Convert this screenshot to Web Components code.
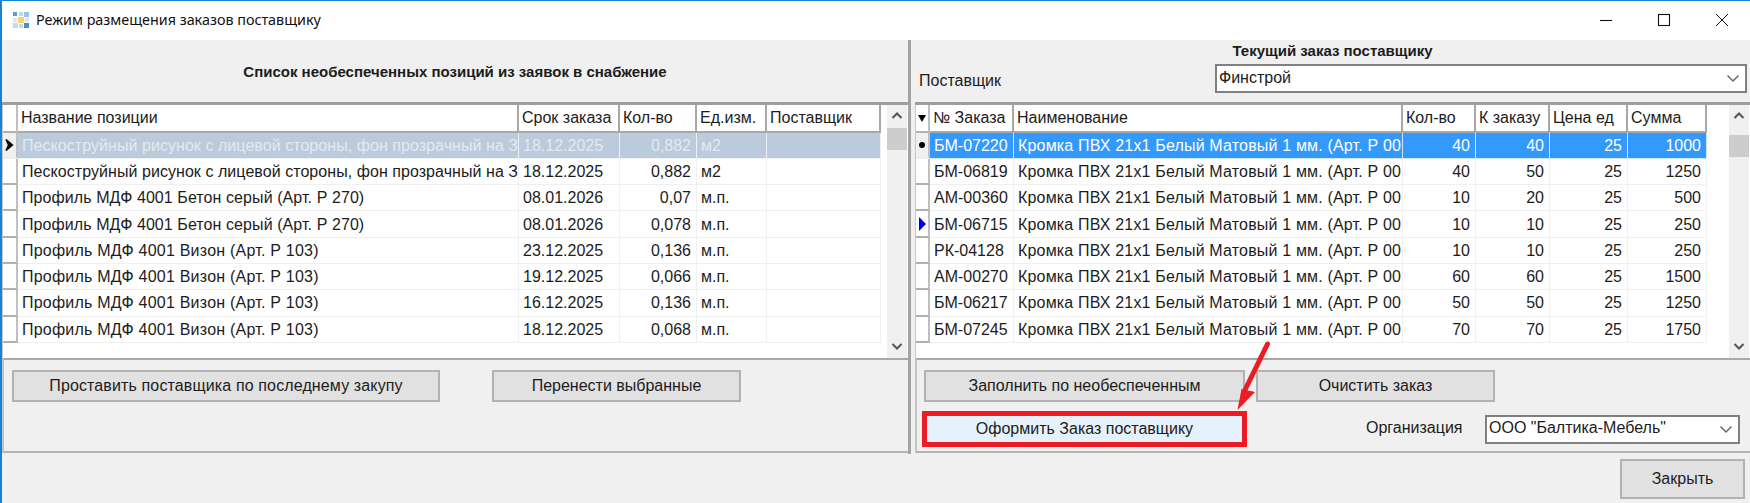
<!DOCTYPE html>
<html lang="ru">
<head>
<meta charset="utf-8">
<title>Режим размещения заказов поставщику</title>
<style>
    html, body { margin: 0; padding: 0; background: #f0f0f0; }
    body { font: 16px "Liberation Sans", Arial, sans-serif; color: #1c1c1c; overflow: hidden; }
</style>
</head>
<body>
<order-window>
    <form-panel slot="left" divider>
        <div slot="head" style="height:62px;display:flex;align-items:center;justify-content:center;font-weight:bold;font-size:15px">Список необеспеченных позиций из заявок в снабжение</div>
        <data-grid slot="grid" source="needs"></data-grid>
        <div slot="actions" style="display:flex;padding:10px 0 0 8px">
            <form-button style="width:428px;letter-spacing:.13px">Проставить поставщика по последнему закупу</form-button>
            <form-button style="width:249px;margin-left:52px">Перенести выбранные</form-button>
        </div>
    </form-panel>
    <form-panel slot="right">
        <div slot="head" style="height:62px;display:flex;flex-direction:column;padding-right:3px">
            <div style="height:22px;text-align:center;font-weight:bold;font-size:15px;line-height:21px;padding-left:3px">Текущий заказ поставщику</div>
            <div style="display:flex;align-items:center;padding-top:2px">
                <span style="flex:1;padding:5px 0 0 4px">Поставщик</span>
                <combo-box style="width:532px;height:29px">Финстрой</combo-box>
            </div>
        </div>
        <data-grid slot="grid" source="order"></data-grid>
        <div slot="actions" style="display:flex;flex-direction:column;padding:10px 0 0 7px">
            <div style="display:flex">
                <form-button style="width:321px">Заполнить по необеспеченным</form-button>
                <form-button style="width:239px;margin-left:11px">Очистить заказ</form-button>
            </div>
            <div style="display:flex;align-items:center;margin-top:9px;margin-left:-2px">
                <form-button accent style="width:325px;height:36px">Оформить Заказ поставщику</form-button>
                <span style="margin-left:119px;width:119px;padding-bottom:2px">Организация</span>
                <combo-box style="width:255px;height:29px">ООО "Балтика-Мебель"</combo-box>
            </div>
        </div>
    </form-panel>
    <form-button slot="footer" style="width:125px;height:40px">Закрыть</form-button>
</order-window>

<script>
const GRID_DATA = {
    needs: {
        head: 15,
        current: 0,
        cols: [
            { w: 501, title: 'Название позиции' },
            { w: 101, title: 'Срок заказа' },
            { w: 77, title: 'Кол-во', right: true },
            { w: 70, title: 'Ед.изм.' },
            { w: 114, title: 'Поставщик' }
        ],
        selClass: 'sel-muted',
        marks: { 0: 'arrow' },
        thumbGap: 1,
        rows: [
            ['Пескоструйный рисунок с лицевой стороны, фон прозрачный на З', '18.12.2025', '0,882', 'м2', ''],
            ['Пескоструйный рисунок с лицевой стороны, фон прозрачный на З', '18.12.2025', '0,882', 'м2', ''],
            ['Профиль МДФ 4001 Бетон серый (Арт. Р 270)', '08.01.2026', '0,07', 'м.п.', ''],
            ['Профиль МДФ 4001 Бетон серый (Арт. Р 270)', '08.01.2026', '0,078', 'м.п.', ''],
            ['Профиль МДФ 4001 Визон (Арт. Р 103)', '23.12.2025', '0,136', 'м.п.', ''],
            ['Профиль МДФ 4001 Визон (Арт. Р 103)', '19.12.2025', '0,066', 'м.п.', ''],
            ['Профиль МДФ 4001 Визон (Арт. Р 103)', '16.12.2025', '0,136', 'м.п.', ''],
            ['Профиль МДФ 4001 Визон (Арт. Р 103)', '18.12.2025', '0,068', 'м.п.', '']
        ]
    },
    order: {
        head: 14,
        current: 0,
        sortMark: true,
        cols: [
            { w: 84, title: '№ Заказа' },
            { w: 389, title: 'Наименование' },
            { w: 73, title: 'Кол-во', right: true },
            { w: 74, title: 'К заказу', right: true },
            { w: 78, title: 'Цена ед', right: true },
            { w: 79, title: 'Сумма', right: true }
        ],
        selClass: 'sel-blue',
        marks: { 0: 'dot', 3: 'blue' },
        thumbGap: 8,
        rows: [
            ['БМ-07220', 40, 40, 25, 1000],
            ['БМ-06819', 40, 50, 25, 1250],
            ['АМ-00360', 10, 20, 25, 500],
            ['БМ-06715', 10, 10, 25, 250],
            ['РК-04128', 10, 10, 25, 250],
            ['АМ-00270', 60, 60, 25, 1500],
            ['БМ-06217', 50, 50, 25, 1250],
            ['БМ-07245', 70, 70, 25, 1750]
        ].map(r => [r[0], 'Кромка ПВХ 21х1 Белый Матовый 1 мм. (Арт. Р 00', r[1], r[2], r[3], r[4]])
    }
};

// the original font runs a little wider on these strings than Liberation Sans
function textSpacing(val) {
    const s = String(val);
    if (s.startsWith('Кромка')) return 0.17;
    if (s.includes('Визон')) return 0.22;
    if (s.includes('Бетон')) return 0.08;
    if (s.startsWith('Пескоструйный')) return 0.055;
    return 0;
}

const MARKS = {
    arrow: '<svg width="11" height="14" viewBox="0 0 11 14"><path d="M2 1.5 L8.5 7 L2 12.5 L4.5 7 Z" fill="#000" stroke="#000" stroke-width="1.4"/></svg>',
    dot: '<svg width="10" height="10" viewBox="0 0 10 10"><circle cx="5" cy="5" r="3" fill="#000"/></svg>',
    blue: '<svg width="10" height="16" viewBox="0 0 10 16"><path d="M2 1 L9 8 L2 15 Z" fill="#0000f0"/></svg>',
    sort: '<svg width="10" height="10" viewBox="0 0 10 10"><path d="M1 2 H9 L5 9 Z" fill="#000"/></svg>'
};

class OrderWindow extends HTMLElement {
    constructor() {
        super();
        const shadow = this.attachShadow({ mode: 'open' });
        shadow.innerHTML = `
        <style>
            :host {
                display: flex;
                flex-direction: column;
                position: relative;
                width: 1750px;
                height: 503px;
                box-sizing: border-box;
                border-top: 1px solid #1583d8;
                border-left: 2px solid #1583d8;
                background: #f0f0f0;
                overflow: hidden;
            }
            .panels {
                display: grid;
                grid-template-columns: 909px 835px;
                column-gap: 4px;
                height: 414px;
            }
            .footer {
                display: flex;
                justify-content: flex-end;
                padding: 5px 5px 0 0;
            }
            .arrow { position: absolute; left: 1226px; top: 339px; }
        </style>
        <title-bar>Режим размещения заказов поставщику</title-bar>
        <div class="panels">
            <slot name="left"></slot>
            <slot name="right"></slot>
        </div>
        <div class="footer"><slot name="footer"></slot></div>
        <svg class="arrow" width="50" height="75" viewBox="0 0 50 75">
            <path d="M39.5 4 L16 52" stroke="#ed1c24" stroke-width="5" stroke-linecap="round" fill="none"/>
            <path d="M9.5 70 L13.5 49 L27 52 Z" fill="#ed1c24"/>
        </svg>
        `;
    }
}

class TitleBar extends HTMLElement {
    constructor() {
        super();
        const shadow = this.attachShadow({ mode: 'open' });
        shadow.innerHTML = `
        <style>
            :host {
                display: flex;
                align-items: center;
                height: 39px;
                box-sizing: border-box;
                padding-bottom: 2px;
                background: #fff;
                flex: none;
            }
            .icon { margin-left: 11px; flex: none; }
            .text {
                margin-left: 7px;
                flex: 1;
                font: 14.33px "Noto Sans", "Open Sans", sans-serif;
                color: #111;
            }
            .btn { width: 58px; height: 37px; display: flex; align-items: center; justify-content: center; flex: none; }
        </style>
        <svg class="icon" width="16" height="16" viewBox="0 0 16 16">
            <rect x="0" y="0" width="4" height="4" fill="#5b9bd5"/>
            <rect x="6" y="0" width="4" height="4" fill="#c5d9ec"/>
            <rect x="11" y="0" width="5" height="5" fill="#9cc3e6"/>
            <rect x="0" y="6" width="4" height="4" fill="#dbe7f3"/>
            <rect x="5" y="5" width="6" height="6" fill="#f5d76e"/>
            <rect x="12" y="6" width="4" height="4" fill="#dbe7f3"/>
            <rect x="0" y="11" width="5" height="5" fill="#c5d9ec"/>
            <rect x="6" y="12" width="4" height="4" fill="#c5d9ec"/>
            <rect x="11" y="11" width="5" height="5" fill="#4a90c8"/>
        </svg>
        <div class="text"><slot></slot></div>
        <div class="btn"><svg width="14" height="14" viewBox="0 0 14 14"><path d="M1 7.5 H13" stroke="#111" stroke-width="1.1"/></svg></div>
        <div class="btn"><svg width="14" height="14" viewBox="0 0 14 14"><rect x="1.5" y="1.5" width="11" height="11" fill="none" stroke="#111" stroke-width="1.1"/></svg></div>
        <div class="btn" style="width:46px;margin-left:6px;margin-right:5px"><svg width="14" height="14" viewBox="0 0 14 14"><path d="M1 1 L13 13 M13 1 L1 13" stroke="#111" stroke-width="1"/></svg></div>
        `;
    }
}

class FormPanel extends HTMLElement {
    constructor() {
        super();
        const shadow = this.attachShadow({ mode: 'open' });
        shadow.innerHTML = `
        <style>
            :host {
                display: flex;
                flex-direction: column;
                box-sizing: border-box;
                min-width: 0;
            }
            :host([divider]) { border-right: 3px solid #a3a3a3; }
            .head { height: 62px; border-bottom: 3px solid #9f9f9f; flex: none; }
            .grid { height: 253px; flex: none; }
            .actions {
                height: 91px;
                border-top: 2px solid #a8a8a8;
                border-bottom: 2px solid #b4b4b4;
                border-left: 2px solid #c4c4c4;
                flex: none;
            }
        </style>
        <div class="head"><slot name="head"></slot></div>
        <div class="grid"><slot name="grid"></slot></div>
        <div class="actions"><slot name="actions"></slot></div>
        `;
    }
}

class FormButton extends HTMLElement {
    constructor() {
        super();
        const shadow = this.attachShadow({ mode: 'open' });
        shadow.innerHTML = `
        <style>
            :host {
                display: flex;
                align-items: center;
                justify-content: center;
                box-sizing: border-box;
                height: 32px;
                flex: none;
                background: #e1e1e1;
                border: 2px solid #b2b2b2;
            }
            :host([accent]) { background: #e5f1fb; border: 5px solid #ed1c24; }
        </style>
        <slot></slot>
        `;
    }
}

class ComboBox extends HTMLElement {
    constructor() {
        super();
        const shadow = this.attachShadow({ mode: 'open' });
        shadow.innerHTML = `
        <style>
            :host {
                display: flex;
                align-items: center;
                box-sizing: border-box;
                flex: none;
                background: #fff;
                border: 2px solid #808080;
                padding-left: 2px;
            }
            .text { flex: 1; padding-bottom: 2px; }
            svg { margin-right: 5px; flex: none; }
        </style>
        <div class="text"><slot></slot></div>
        <svg width="14" height="9" viewBox="0 0 14 9"><path d="M1.5 1.5 L7 7 L12.5 1.5" fill="none" stroke="#6a6a6a" stroke-width="1.5"/></svg>
        `;
    }
}

class DataGrid extends HTMLElement {
    constructor() {
        super();
        this.attachShadow({ mode: 'open' });
    }
    connectedCallback() {
        const data = GRID_DATA[this.getAttribute('source')];
        const template = [data.head + 'px'].concat(data.cols.map(c => c.w + 'px')).join(' ');

        let cells = `<div class="cell hcell rowhead">${data.sortMark ? MARKS.sort : ''}</div>`;
        data.cols.forEach(c => {
            cells += `<div class="cell hcell">${c.title}</div>`;
        });
        data.rows.forEach((row, i) => {
            const sel = i === data.current ? data.selClass : '';
            const mark = data.marks[i] ? MARKS[data.marks[i]] : '';
            cells += `<div class="cell rowhead ${i === data.current ? 'cur' : ''}">${mark}</div>`;
            row.forEach((val, n) => {
                cells += `<div class="cell ${sel} ${data.cols[n].right ? 'num' : ''}" style="letter-spacing:${textSpacing(val)}px">${val}</div>`;
            });
        });

        this.shadowRoot.innerHTML = `
        <style>
            :host {
                display: flex;
                height: 253px;
                box-sizing: border-box;
                background: #fff;
                border-left: 1px solid #c8c8c8;
                padding-right: 1px;
            }
            .table {
                flex: 1;
                display: grid;
                grid-template-columns: ${template};
                grid-template-rows: 27.5px repeat(8, 26.3px);
                align-content: start;
            }
            .cell {
                box-sizing: border-box;
                display: flex;
                align-items: center;
                white-space: nowrap;
                overflow: hidden;
                padding: 1px 0 0 4px;
                border-right: 1px solid #f0f0f0;
                border-bottom: 1px solid #f0f0f0;
            }
            .hcell {
                padding-left: 3px;
                border-right: 2px solid #a8a8a8;
                border-bottom: 2px solid #a8a8a8;
            }
            .rowhead {
                padding: 0;
                justify-content: center;
                border-right: 2px solid #c0c0c0;
                border-bottom: 2px solid #b0b0b0;
            }
            .rowhead.cur { background: #f0f0f0; border-bottom-color: #f0f0f0; }
            .num { justify-content: flex-end; padding-right: 5px; padding-left: 0; }
            .sel-muted { background: #bccbdb; color: #e3e9f0; border-color: #eef1f4; }
            .sel-blue { background: #3399ff; color: #fff; border-color: #cfe6ff; }
            .scroll {
                width: 20px;
                flex: none;
                display: flex;
                flex-direction: column;
                align-items: center;
                background: #f0f0f0;
            }
            .scroll svg { flex: none; }
            .up { margin-top: 6px; }
            .track { height: 7px; flex: none; }
            .thumb { width: 100%; height: 22px; background: #cdcdcd; margin-top: ${data.thumbGap}px; flex: none; }
            .down { margin-top: auto; margin-bottom: 7px; }
        </style>
        <div class="table">${cells}</div>
        <div class="scroll">
            <svg class="up" width="12" height="9" viewBox="0 0 12 9"><path d="M1.5 7 L6 2.5 L10.5 7" fill="none" stroke="#555" stroke-width="2"/></svg>
            <div class="track"></div>
            <div class="thumb"></div>
            <svg class="down" width="12" height="9" viewBox="0 0 12 9"><path d="M1.5 2 L6 6.5 L10.5 2" fill="none" stroke="#555" stroke-width="2"/></svg>
        </div>
        `;
    }
}

customElements.define('order-window', OrderWindow);
customElements.define('title-bar', TitleBar);
customElements.define('form-panel', FormPanel);
customElements.define('form-button', FormButton);
customElements.define('combo-box', ComboBox);
customElements.define('data-grid', DataGrid);
</script>
</body>
</html>
